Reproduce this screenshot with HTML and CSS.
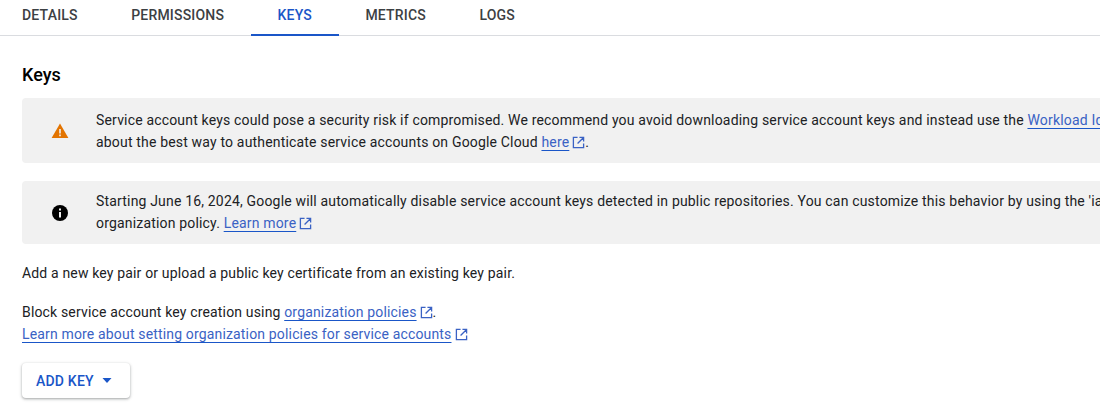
FILE: index.html
```html
<!DOCTYPE html>
<html lang="en">
<head>
<meta charset="utf-8">
<title>Keys</title>
<link rel="stylesheet" href="styles.css">
</head>
<body>
<svg class="defs" width="0" height="0" aria-hidden="true">
  <symbol id="ext" viewBox="0 0 14 14">
    <path d="M6 1.5H1.5v11h11V8M8 1.5h4.5V6M12.2 1.8 6 8" fill="none" stroke="currentColor" stroke-width="1.4"/>
  </symbol>
</svg>
<nav class="tabs">
  <a class="tab">Details</a>
  <a class="tab">Permissions</a>
  <a class="tab active">Keys</a>
  <a class="tab">Metrics</a>
  <a class="tab">Logs</a>
</nav>
<main class="content">
  <h2 class="title">Keys</h2>
  <div class="notice first">
    <svg class="notice-icon" viewBox="0 0 18 18"><path fill="#e37400" d="M9 1.6 0.6 16h16.8z"/><path fill="#f1f1f1" d="M8.2 7h1.6v4.6H8.2zM8.2 12.6h1.6v1.6H8.2z"/></svg>
    <p class="notice-text">Service account keys could pose a security risk if compromised. We recommend you avoid downloading service account keys and instead use the <span class="link">Workload Identity Federation</span><br>about the best way to authenticate service accounts on Google Cloud <span class="link">here</span><svg class="ext"><use href="#ext"/></svg>.</p>
  </div>
  <div class="notice second">
    <svg class="notice-icon" viewBox="0 0 18 18"><circle cx="9" cy="9" r="8" fill="#000"/><path fill="#f1f1f1" d="M8 8h2v5.4H8zM8 4.6h2v2H8z"/></svg>
    <p class="notice-text">Starting June 16, 2024, Google will automatically disable service account keys detected in public repositories. You can customize this behavior by using the 'iam.serviceAccounts.disableExposedKeys'<br>organization policy. <span class="link">Learn more</span><svg class="ext"><use href="#ext"/></svg></p>
  </div>
  <p class="para add">Add a new key pair or upload a public key certificate from an existing key pair.</p>
  <p class="para block">Block service account key creation using <span class="link">organization policies</span><svg class="ext"><use href="#ext"/></svg>.<br><span class="link">Learn more about setting organization policies for service accounts</span><svg class="ext"><use href="#ext"/></svg></p>
  <button class="add-key" type="button">Add key<svg class="caret" viewBox="0 0 10 5"><path d="M0.5 0h9L5 5z" fill="currentColor"/></svg></button>
</main>
</body>
</html>
```
FILE: styles.css
```css
* { box-sizing: border-box; }
html, body { margin: 0; padding: 0; background: #fff; overflow: hidden; height: 412px; }
body { font-family: Roboto, "Liberation Sans", sans-serif; font-size: 14px; color: #202124; }
.defs { position: absolute; }
.tabs { display: flex; height: 36px; padding-left: 22px; border-bottom: 1px solid #dadce0; }
.tab { margin-bottom: -1px; padding: 7px 26.7px 0; font-weight: 500; font-size: 14px; letter-spacing: 0.2px; text-transform: uppercase; color: #3c4043; }
.tab:first-child { padding-left: 0; }
.tab.active { color: #1a56c8; border-bottom: 2px solid #1a56c8; }
.content { padding-left: 22px; width: 1400px; }
.title { margin: 27px 0 11px; font-size: 18px; line-height: 24px; font-weight: 500; color: #000; }
.notice { display: flex; align-items: center; height: 65px; background: #f1f1f1; border-radius: 4px; }
.notice.second { height: 63px; margin-top: 18px; padding-bottom: 1px; }
.notice.second .notice-icon { margin-top: 1px; }
.notice-icon { width: 18px; height: 18px; margin-left: 29px; margin-right: 27px; flex: none; }
.notice-text { margin: 0; line-height: 22px; white-space: nowrap; letter-spacing: 0.175px; }
.link { color: #3a62c4; text-decoration: underline; text-decoration-color: #1a56c8; text-underline-offset: 3px; }
.ext { width: 13px; height: 13px; margin-left: 3px; vertical-align: -2px; color: #3a62c4; }
.para { margin: 0; line-height: 22px; white-space: nowrap; letter-spacing: 0.16px; }
.add { margin-top: 18px; }
.block { margin-top: 17px; }
.add-key { display: flex; align-items: center; width: 108px; height: 35px; margin-top: 18px; padding: 0 0 0 14px; border: 0; border-radius: 4px; background: #fff; font: 500 14px Roboto, sans-serif; letter-spacing: 0.2px; text-transform: uppercase; color: #1a56c8; box-shadow: 0 1px 2px rgba(60,64,67,.3), 0 1px 3px 1px rgba(60,64,67,.15); }
.caret { width: 10px; height: 5px; margin-left: 8px; }
```
